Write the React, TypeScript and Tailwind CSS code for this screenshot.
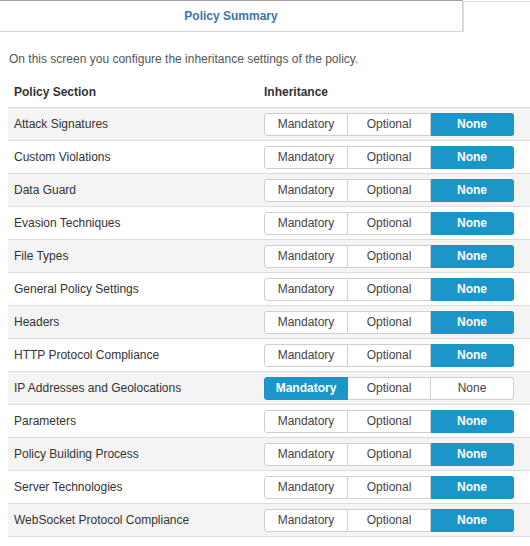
import React from "react";

const rows: { name: string; sel: "Mandatory" | "Optional" | "None" }[] = [
  { name: "Attack Signatures", sel: "None" },
  { name: "Custom Violations", sel: "None" },
  { name: "Data Guard", sel: "None" },
  { name: "Evasion Techniques", sel: "None" },
  { name: "File Types", sel: "None" },
  { name: "General Policy Settings", sel: "None" },
  { name: "Headers", sel: "None" },
  { name: "HTTP Protocol Compliance", sel: "None" },
  { name: "IP Addresses and Geolocations", sel: "Mandatory" },
  { name: "Parameters", sel: "None" },
  { name: "Policy Building Process", sel: "None" },
  { name: "Server Technologies", sel: "None" },
  { name: "WebSocket Protocol Compliance", sel: "None" },
];

const opts = ["Mandatory", "Optional", "None"] as const;

function Seg({ sel }: { sel: string }) {
  return (
    <div className="flex h-[23px] w-[250px]">
      {opts.map((o, i) => {
        const active = o === sel;
        const round =
          i === 0 ? "rounded-l-[3px]" : i === 2 ? "rounded-r-[3px]" : "";
        const border = i === 0 ? "border" : "border border-l-0";
        return (
          <div
            key={o}
            className={`flex flex-1 items-center justify-center ${border} ${round} ${
              active
                ? "border-[#1a94c6] bg-[#1a96c8] font-bold text-white"
                : "border-[#cfcfcf] bg-white text-[#444]"
            }`}
          >
            {o}
          </div>
        );
      })}
    </div>
  );
}

export default function App() {
  return (
    <div
      className="h-[546px] w-[530px] overflow-hidden bg-white text-[12px] text-[#333]"
      style={{ fontFamily: '"Liberation Sans", Arial, sans-serif' }}
    >
      <div className="flex h-[32px]">
        <div className="flex w-[463px] items-center justify-center border-t border-r border-b border-t-[#a0a0a0] border-r-[#d6d6d6] border-b-[#d6d6d6] font-bold text-[#3f74a6]">
          Policy Summary
        </div>
        <div className="mt-[1px] flex-1 border-t border-l border-[#dcdcdc]" />
      </div>
      <div className="mt-[18px] pl-[9px] text-[#555]">
        On this screen you configure the inheritance settings of the policy.
      </div>
      <div className="ml-[8px] mt-[8px]">
        <div className="flex h-[32px] items-center border-b border-[#d6d6d6] font-bold">
          <div className="w-[256px] pl-[6px]">Policy Section</div>
          <div>Inheritance</div>
        </div>
        {rows.map((r, i) => (
          <div
            key={r.name}
            className={`flex h-[33px] items-center border-b border-[#dcdcdc] ${
              i % 2 === 0 ? "bg-[#f4f4f4]" : "bg-white"
            }`}
          >
            <div className="w-[256px] pl-[6px]">{r.name}</div>
            <Seg sel={r.sel} />
          </div>
        ))}
      </div>
    </div>
  );
}
